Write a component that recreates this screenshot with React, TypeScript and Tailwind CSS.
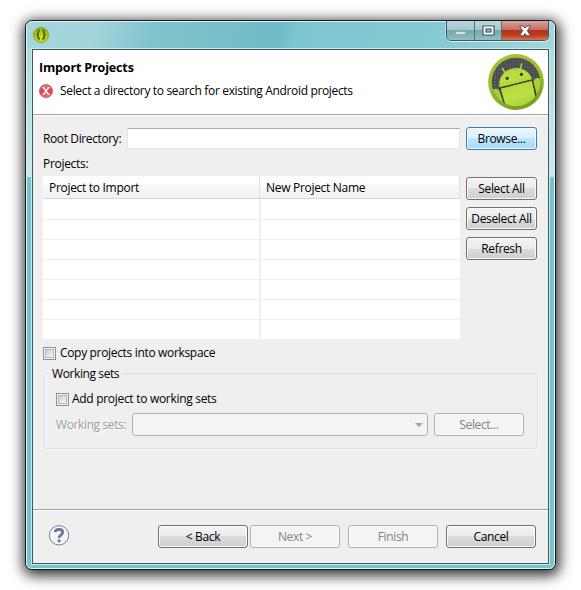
import React from 'react';

const cx = (...parts: (string | undefined)[]) => parts.filter(Boolean).join(' ');

function Button({ label, className, kind = 'normal' }: { label: string; className?: string; kind?: 'normal' | 'hot' | 'disabled' }) {
  const look = {
    normal: 'border-[#707070] bg-[linear-gradient(#f3f3f3,#ebebeb_50%,#dcdcdc_50%,#cecece)] text-black shadow-[inset_0_0_0_1px_#fafafa]',
    hot: 'border-[#3c7fb1] bg-[linear-gradient(#eaf6fd,#d9f0fc_50%,#bee6fd_50%,#a7d9f5)] text-black shadow-[inset_0_0_0_1px_#f0faff]',
    disabled: 'border-[#adb2b5] bg-[#f4f4f4] text-[#838383] shadow-[inset_0_0_0_1px_#fafafa]',
  }[kind];
  return (
    <button className={cx('flex h-[23px] shrink-0 items-center justify-center rounded-[3px] border tracking-[-0.35px] whitespace-nowrap', look, className)}>
      <span className="pt-px">{label}</span>
    </button>
  );
}

function Checkbox() {
  return (
    <span className="flex size-[13px] shrink-0 items-center justify-center border border-[#8e8f8f] bg-[#f4f4f4]">
      <span className="size-[9px] border border-[#b4b8bd] bg-[linear-gradient(135deg,#cbcfd5,#f6f6f6)]" />
    </span>
  );
}

function AppIcon() {
  return (
    <svg width="17" height="17" viewBox="0 0 17 17">
      <defs>
        <radialGradient id="app" cx=".5" cy=".7" r=".65">
          <stop offset="0" stopColor="#d3e61c" />
          <stop offset="1" stopColor="#8fb414" />
        </radialGradient>
      </defs>
      <circle cx="8" cy="8.9" r="7.7" fill="url(#app)" stroke="#86a22a" strokeWidth=".8" />
      <g transform="translate(-.5 .2)" fill="none" stroke="#535c2a" strokeWidth="1.8">
        <path d="M7.4 4.2C5.6 4.2 5.8 5.4 5.8 6.6S5.4 8.2 4.2 8.5C5.4 8.8 5.8 9.2 5.8 10.4S5.6 12.8 7.4 12.8" />
        <path d="M9.8 4.2C11.6 4.2 11.4 5.4 11.4 6.6S11.8 8.2 13 8.5C11.8 8.8 11.4 9.2 11.4 10.4S11.6 12.8 9.8 12.8" />
      </g>
    </svg>
  );
}

function ErrorIcon() {
  return (
    <svg width="14" height="14" viewBox="0 0 14 14">
      <defs>
        <linearGradient id="err" x2="0" y2="1">
          <stop stopColor="#d8787a" />
          <stop offset=".5" stopColor="#e04452" />
          <stop offset="1" stopColor="#f76873" />
        </linearGradient>
      </defs>
      <circle cx="7" cy="7" r="6.6" fill="url(#err)" stroke="#c8555a" strokeWidth=".7" />
      <path d="M4.4 3.4L9.6 10.6M9.8 3.4L4.4 10.6" stroke="#fff" strokeWidth="1.5" />
      <path d="M3.4 3.6H5.6M8.6 3.6H10.8M3.4 10.4H5.6M8.6 10.4H10.8" stroke="#fff" strokeWidth=".8" />
    </svg>
  );
}

function AndroidBadge() {
  return (
    <svg width="58" height="58" viewBox="0 0 58 58">
      <defs>
        <linearGradient id="ring" x2=".35" y2="1">
          <stop stopColor="#a2c535" />
          <stop offset=".6" stopColor="#98bf2c" />
          <stop offset="1" stopColor="#7c9f20" />
        </linearGradient>
        <linearGradient id="body" x1=".3" x2=".7" y2="1">
          <stop stopColor="#b2d739" />
          <stop offset=".5" stopColor="#bbe044" />
          <stop offset="1" stopColor="#a4c932" />
        </linearGradient>
        <pattern id="mesh" width="3" height="3" patternUnits="userSpaceOnUse">
          <rect width="3" height="3" fill="#58595b" />
          <path d="M0 0H3M0 0V3" stroke="#48494b" strokeWidth="1.6" />
        </pattern>
        <clipPath id="disc"><circle cx="29" cy="29" r="24.3" /></clipPath>
      </defs>
      <circle cx="29" cy="29" r="27.9" fill="url(#ring)" />
      <g clipPath="url(#disc)">
        <rect width="58" height="58" fill="url(#mesh)" />
        <path d="M18.5 20.5L15.5 15.5M33.1 17L34.6 11" stroke="#b3d63c" strokeWidth="1.5" strokeLinecap="round" />
        <path d="M12.5 34.5C11 25 16.5 18 24.5 15.8C33.5 13.4 42 17.5 45.2 26.5Z" fill="url(#body)" />
        <path d="M13.5 35.5L45 27.5L51 58H18Z" fill="url(#body)" />
        <path d="M4 39Q6 35.5 9.5 35.8Q12 36 12.8 39L19 58H0Z" fill="#a9cf36" />
        <path d="M46.3 29Q47 25.5 50 25Q53.5 24.5 55 30L58 49L51 49Z" fill="#a9cf36" />
        <path d="M11.8 35.3L45.5 26.9M13 36L18 52.5M45.3 27.2L50 45.5" fill="none" stroke="#3a4020" strokeWidth="1.2" />
      </g>
      <circle cx="20.2" cy="25.3" r="1.6" fill="#363b14" />
      <circle cx="34.4" cy="21.4" r="1.6" fill="#363b14" />
    </svg>
  );
}

function HelpIcon() {
  return (
    <svg width="22" height="22" viewBox="0 0 22 22">
      <g transform="translate(.7 0)">
        <circle cx="10.3" cy="10.3" r="9.7" fill="#f3f5f7" stroke="#70819c" strokeWidth="1" />
        <path d="M6.4 7.2C6.7 4.9 8.2 4.3 10.2 4.3C12.6 4.3 14 5.4 14 7.2C14 10 10.4 9.7 10.4 13" fill="none" stroke="#657793" strokeWidth="2.7" />
        <circle cx="10.4" cy="15.8" r="1.6" fill="#657793" />
      </g>
    </svg>
  );
}

function CaptionButtons() {
  const glass = 'bg-[linear-gradient(#bcd8dc,#a3c7cc_48%,#76a7ae_50%,#8dc0c5)]';
  return (
    <div className="flex h-[20px] w-[103px] overflow-hidden rounded-b-[5px] border border-t-0 border-[#42585f] shadow-[0_1px_0_#d3eff1,-1px_0_0_#b8dee2]">
      <div className={cx('flex w-[28px] items-center justify-center border-r border-[#52727a] pt-[4px]', glass)}>
        <span className="h-[4px] w-[11px] border border-[#94abae] bg-[#d5e2e2]" />
      </div>
      <div className={cx('flex w-[27px] items-center justify-center border-r border-[#52727a]', glass)}>
        <svg width="13" height="11" viewBox="0 0 13 11">
          <path d="M1 1H12V10H1Z" fill="#f7ffff" stroke="#455760" strokeWidth="1.2" />
          <rect x="4" y="4" width="5" height="3" fill="#a0c4c9" stroke="#455760" strokeWidth="1.2" />
        </svg>
      </div>
      <div className="flex flex-1 items-center justify-center bg-[linear-gradient(#d6a49b,#c17062_45%,#b83219_50%,#bb3d1e_75%,#d47650)]">
        <svg width="14" height="12" viewBox="0 0 14 12">
          <path d="M1.5 1H5.2L7 3L8.8 1H12.5L9.4 5.8L12.5 10.8H8.8L7 8.6L5.2 10.8H1.5L4.6 5.8Z" fill="#fff" stroke="#50505a" />
        </svg>
      </div>
    </div>
  );
}

export default function App() {
  return (
    <main className="h-[590px] w-[581px] overflow-hidden bg-white pt-[20px] pl-[25px] font-['Open_Sans','Noto_Sans',sans-serif] text-[12px] leading-[16px] tracking-[-0.3px] text-black">
      <div className="h-[550px] w-[531px] rounded-[7px] border border-[#10191b] bg-[#75c2cc] shadow-[1px_3px_13px_3px_rgba(0,0,0,0.78)]">
        <div className="h-full rounded-[6px] border border-[#dff5f7] bg-[linear-gradient(#a8d8de,#cbe8ec_155px,#78c4ce_155px,#77c4ce)]">
          <div className="flex h-[27px] items-start justify-between rounded-t-[5px] bg-[linear-gradient(105deg,#a6d6dd_0%,#a3d5dc_13%,#80c3ce_24%,#6fbbc7_48%,#7cc6d1_51%,#86cbd5_80%,#a5d6de_100%)] pl-[6px]">
            <div className="pt-[4px]"><AppIcon /></div>
            <div className="-mt-px mr-[5px]"><CaptionButtons /></div>
          </div>
          <div className="mx-[5px] flex h-[515px] flex-col border border-[#3d5c62] bg-[#efefef] shadow-[0_0_0_1px_#c9e9ed]">
            <header className="flex h-[65px] shrink-0 justify-between border-b border-[#a0a0a0] bg-white pl-[6px]">
              <div>
                <h1 className="pt-[10px] text-[12.5px] font-bold tracking-[-0.15px]">Import Projects</h1>
                <div className="mt-[7px] flex items-center gap-[7px] tracking-[-0.34px]">
                  <ErrorIcon />
                  <span>Select a directory to search for existing Android projects</span>
                </div>
              </div>
              <div className="pt-[3px] pr-[3px]"><AndroidBadge /></div>
            </header>

            <section className="flex flex-1 flex-col border-t border-white px-[10px]">
              <div className="mt-[11px] flex items-center">
                <label className="w-[84px] pt-px tracking-[-0.38px] whitespace-nowrap">Root Directory:</label>
                <div className="h-[21px] w-[333px] rounded-[1px] border border-[#e2e3ea] border-t-[#abadb3] bg-white" />
                <Button label="Browse..." kind="hot" className="ml-[6px] w-[71px]" />
              </div>
              <div className="mt-[6px] h-[16px]">Projects:</div>
              <div className="mt-[4px] flex h-[163px]">
                <div className="w-[417px] bg-white">
                  <div className="flex h-[23px] border-b border-[#d5d5d5] bg-[linear-gradient(#fff_9px,#f7f8fa_9px,#f1f2f4)]">
                    <div className="w-[217px] border-r border-[#dfe0e3] pt-[4px] pl-[6px]">Project to Import</div>
                    <div className="w-[200px] border-r border-[#dfe0e3] pt-[4px] pl-[6px]">New Project Name</div>
                  </div>
                  <div className="pt-px">
                    {[0, 1, 2, 3, 4, 5].map((row) => (
                      <div key={row} className="flex h-[20px] border-b border-[#edf0f2]">
                        <div className="w-[218px] border-r-2 border-[#edf1f4]" />
                      </div>
                    ))}
                    <div className="h-[19px] w-[218px] border-r-2 border-[#edf1f4]" />
                  </div>
                </div>
                <div className="ml-[6px] flex w-[71px] flex-col gap-[7px] pt-px">
                  <Button label="Select All" />
                  <Button label="Deselect All" className="tracking-[-0.4px]" />
                  <Button label="Refresh" />
                </div>
              </div>
              <div className="mt-[5px] flex h-[16px] items-center gap-[4px] pt-[2px] tracking-[-0.33px]">
                <Checkbox />
                <span>Copy projects into workspace</span>
              </div>
              <fieldset className="mt-[6px] ml-px h-[83px] w-[494px] rounded-[3px] border border-[#d5dfe5] shadow-[1px_1px_0_#fbfbfb,inset_1px_0_0_#fbfbfb]">
                <legend className="ml-[5px] px-[2px] leading-[15px] tracking-[-0.4px]">Working sets</legend>
                <div className="mt-[10px] ml-[11px] flex h-[16px] items-center gap-[3px]">
                  <Checkbox />
                  <span>Add project to working sets</span>
                </div>
                <div className="mt-[6px] ml-[11px] flex items-center text-[#9c9c9c]">
                  <span className="w-[76px] pt-px tracking-[-0.38px] whitespace-nowrap [text-shadow:1px_1px_0_#fff]">Working sets:</span>
                  <div className="flex h-[23px] w-[296px] items-center justify-end rounded-[3px] border border-[#adb2b5] bg-[#f4f4f4] pr-[4px]">
                    <svg width="8" height="4" viewBox="0 0 8 4"><path d="M0 0H8L4 4Z" fill="#a0a3a5" /></svg>
                  </div>
                  <Button label="Select..." kind="disabled" className="ml-[6px] w-[90px]" />
                </div>
              </fieldset>
            </section>

            <footer className="flex h-[54px] shrink-0 items-start border-t border-[#a0a0a0] pt-[15px] pl-[15px] shadow-[inset_0_1px_0_#fff]">
              <div className="mr-[88px] w-[22px]"><HelpIcon /></div>
              <Button label="< Back" className="w-[90px]" />
              <Button label="Next >" kind="disabled" className="ml-[2px] w-[90px]" />
              <Button label="Finish" kind="disabled" className="ml-[8px] w-[90px]" />
              <Button label="Cancel" className="ml-[8px] w-[90px]" />
            </footer>
          </div>
        </div>
      </div>
    </main>
  );
}
